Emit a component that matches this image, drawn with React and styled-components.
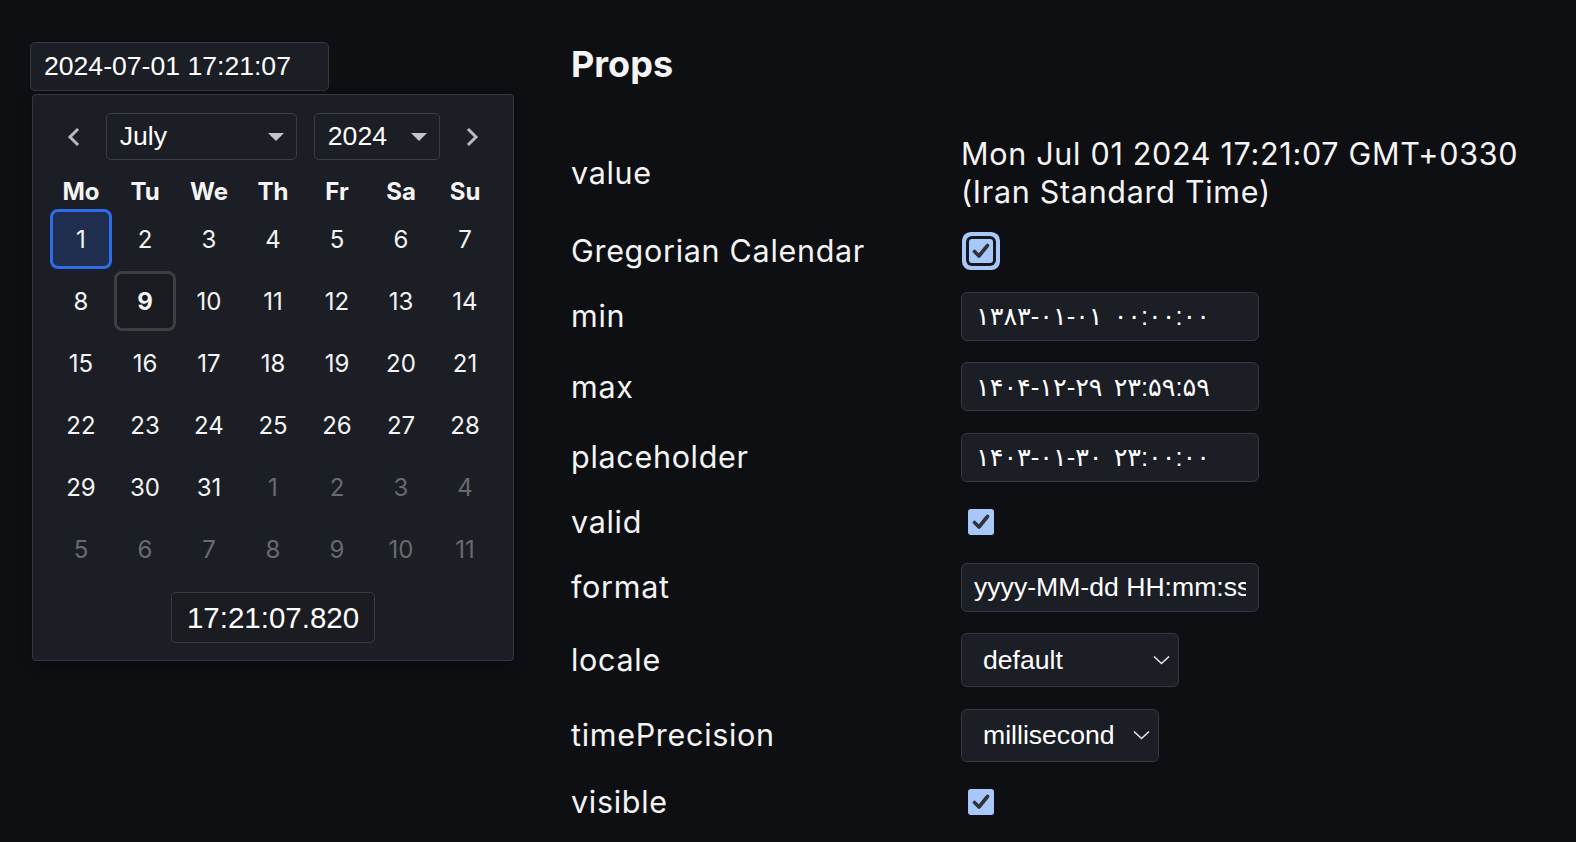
import React from "react";
import styled, { createGlobalStyle } from "styled-components";

const GlobalStyle = createGlobalStyle`
  html, body {
    margin: 0;
    background: #0e0f13;
  }
  body {
    font-family: Inter, "Noto Sans", sans-serif;
    color: #f2f2f2;
  }
`;

const weekdays = ["Mo", "Tu", "We", "Th", "Fr", "Sa", "Su"];

// July 2024 starts on a Monday, grid ends on Aug 11
const buildDays = () => {
  const days = [];
  for (let d = 1; d <= 31; d++) days.push({ n: d, outside: false });
  for (let d = 1; d <= 11; d++) days.push({ n: d, outside: true });
  return days;
};

const ChevronIcon = ({ dir }) => (
  <svg width="14" height="20" viewBox="0 0 14 20">
    <polyline
      points={dir === "left" ? "10,3 3,10 10,17" : "4,3 11,10 4,17"}
      fill="none"
      stroke="#b8b9bc"
      strokeWidth="3"
      strokeLinecap="square"
    />
  </svg>
);

const Caret = () => (
  <svg width="16" height="8" viewBox="0 0 16 8">
    <polygon points="0,0 16,0 8,8" fill="#c4c5c8" />
  </svg>
);

const SelectChevron = () => (
  <svg width="17" height="10" viewBox="0 0 17 10">
    <polyline points="1,1.5 8.5,8.5 16,1.5" fill="none" stroke="#e8e8e8" strokeWidth="1.6" />
  </svg>
);

const CheckMark = () => (
  <svg width="18" height="16" viewBox="0 0 18 16">
    <polyline
      points="2.5,8.5 7,13 15.5,2.5"
      fill="none"
      stroke="#323338"
      strokeWidth="3.6"
      strokeLinecap="round"
      strokeLinejoin="round"
    />
  </svg>
);

const App = () => {
  const days = buildDays();
  return (
    <>
      <GlobalStyle />
      <Page>
        <PickerColumn>
          <DateField>2024-07-01 17:21:07</DateField>
          <Popup>
            <CalHeader>
              <NavButton>
                <ChevronIcon dir="left" />
              </NavButton>
              <CalSelect width={192}>
                <span>July</span>
                <Caret />
              </CalSelect>
              <CalSelect width={127} $offset={9}>
                <span>2024</span>
                <Caret />
              </CalSelect>
              <NavButton>
                <ChevronIcon dir="right" />
              </NavButton>
            </CalHeader>
            <DayGrid>
              {weekdays.map((w) => (
                <Weekday key={w}>{w}</Weekday>
              ))}
              {days.map((d, i) => (
                <Day
                  key={i}
                  $outside={d.outside}
                  $selected={!d.outside && d.n === 1}
                  $today={!d.outside && d.n === 9}
                >
                  {d.n}
                </Day>
              ))}
            </DayGrid>
            <TimeRow>
              <TimeField>17:21:07.820</TimeField>
            </TimeRow>
          </Popup>
        </PickerColumn>

        <PropsColumn>
          <Heading>Props</Heading>
          <PropsGrid>
            <Label>value</Label>
            <ValueText>Mon Jul 01 2024 17:21:07 GMT+0330 (Iran Standard Time)</ValueText>

            <Label>Gregorian Calendar</Label>
            <Cell>
              <CheckBox $focused>
                <CheckMark />
              </CheckBox>
            </Cell>

            <Label>min</Label>
            <Cell>
              <TextField $persian>
                <FieldText>۱۳۸۳-۰۱-۰۱ ۰۰:۰۰:۰۰</FieldText>
              </TextField>
            </Cell>

            <Label>max</Label>
            <Cell>
              <TextField $persian>
                <FieldText>۱۴۰۴-۱۲-۲۹ ۲۳:۵۹:۵۹</FieldText>
              </TextField>
            </Cell>

            <Label>placeholder</Label>
            <Cell>
              <TextField $persian>
                <FieldText>۱۴۰۳-۰۱-۳۰ ۲۳:۰۰:۰۰</FieldText>
              </TextField>
            </Cell>

            <Label>valid</Label>
            <Cell>
              <CheckBox>
                <CheckMark />
              </CheckBox>
            </Cell>

            <Label>format</Label>
            <Cell>
              <TextField>
                <FieldText>yyyy-MM-dd HH:mm:ss</FieldText>
              </TextField>
            </Cell>

            <Label>locale</Label>
            <Cell>
              <NativeSelect width={218} height={54}>
                <span>default</span>
                <SelectChevron />
              </NativeSelect>
            </Cell>

            <Label>timePrecision</Label>
            <Cell>
              <NativeSelect width={198} height={53}>
                <span>millisecond</span>
                <SelectChevron />
              </NativeSelect>
            </Cell>

            <Label>visible</Label>
            <Cell>
              <CheckBox>
                <CheckMark />
              </CheckBox>
            </Cell>
          </PropsGrid>
        </PropsColumn>
      </Page>
    </>
  );
};

export default App;

const Page = styled.div`
  display: flex;
  align-items: flex-start;
  padding: 42px 0 0 30px;
  min-height: 842px;
  box-sizing: border-box;
`;

const PickerColumn = styled.div`
  width: 485px;
  flex-shrink: 0;
  display: flex;
  flex-direction: column;
`;

const fieldFont = `
  font-family: "Liberation Sans", Arial, "DejaVu Sans", sans-serif;
  font-size: 26.6px;
  color: #ffffff;
`;

const DateField = styled.div`
  ${fieldFont}
  width: 299px;
  height: 49px;
  box-sizing: border-box;
  display: flex;
  align-items: center;
  padding-left: 13px;
  background: #1c1e25;
  border: 1px solid #353842;
  border-radius: 5px;
`;

const Popup = styled.div`
  margin: 3px 0 0 2px;
  width: 482px;
  box-sizing: border-box;
  padding: 18px 17px 17px;
  background: #1c1e25;
  border: 1px solid #353842;
  border-radius: 4px;
  box-shadow: 0 4px 14px rgba(0, 0, 0, 0.3);
`;

const CalHeader = styled.div`
  display: flex;
  align-items: center;
  gap: 8px;
  height: 47px;
`;

const NavButton = styled.div`
  width: 48px;
  height: 47px;
  display: flex;
  align-items: center;
  justify-content: center;
`;

const CalSelect = styled.div`
  ${fieldFont}
  width: ${(p) => p.width}px;
  margin-left: ${(p) => p.$offset || 0}px;
  height: 47px;
  box-sizing: border-box;
  display: flex;
  align-items: center;
  justify-content: space-between;
  padding: 0 12px 0 13px;
  background: #1c1e25;
  border: 1px solid #3a3d47;
  border-radius: 5px;
`;

const DayGrid = styled.div`
  display: grid;
  grid-template-columns: repeat(7, 62px);
  grid-auto-rows: 60px;
  grid-template-rows: 31px;
  gap: 2px;
  margin-top: 16px;
`;

const Weekday = styled.div`
  font-family: Inter, sans-serif;
  font-weight: 700;
  font-size: 24px;
  display: flex;
  align-items: center;
  justify-content: center;
  color: #f4f4f4;
`;

const Day = styled.div`
  font-family: Inter, sans-serif;
  font-size: 24px;
  display: flex;
  align-items: center;
  justify-content: center;
  box-sizing: border-box;
  border-radius: 8px;
  color: ${(p) => (p.$outside ? "#686a70" : "#f4f4f4")};
  font-weight: ${(p) => (p.$today ? 700 : 400)};
  border: 3px solid
    ${(p) => (p.$selected ? "#2f6de8" : p.$today ? "#3c3e44" : "transparent")};
  background: ${(p) => (p.$selected ? "#1f2d4e" : p.$today ? "#1a1b20" : "transparent")};
`;

const TimeRow = styled.div`
  display: flex;
  justify-content: center;
  margin-top: 13px;
`;

const TimeField = styled.div`
  ${fieldFont}
  font-size: 29.5px;
  width: 204px;
  height: 51px;
  box-sizing: border-box;
  display: flex;
  align-items: center;
  justify-content: center;
  background: #1a1c22;
  border: 1px solid #383b44;
  border-radius: 5px;
`;

const PropsColumn = styled.div`
  margin-left: 56px;
  flex: 1;
  padding-right: 30px;
`;

const Heading = styled.h2`
  margin: 0;
  font-family: Inter, sans-serif;
  font-size: 36px;
  line-height: 44px;
  font-weight: 700;
  color: #f4f4f4;
`;

const PropsGrid = styled.div`
  display: grid;
  grid-template-columns: 390px 1fr;
  row-gap: 21.5px;
  align-items: center;
  margin-top: 48.5px;
`;

const Label = styled.div`
  font-family: Inter, sans-serif;
  font-size: 30.5px;
  letter-spacing: 0.7px;
  line-height: 38px;
  color: #f4f4f4;
  white-space: nowrap;
`;

const ValueText = styled.div`
  font-family: Inter, sans-serif;
  font-size: 30.5px;
  letter-spacing: 0.7px;
  line-height: 38px;
  color: #f4f4f4;
`;

const Cell = styled.div`
  display: flex;
  align-items: center;
  min-height: 38px;
`;

const CheckBox = styled.div`
  width: ${(p) => (p.$focused ? 24 : 26)}px;
  height: ${(p) => (p.$focused ? 24 : 26)}px;
  margin-left: ${(p) => (p.$focused ? 8 : 7)}px;
  box-sizing: border-box;
  display: flex;
  align-items: center;
  justify-content: center;
  background: #a8c8fa;
  border-radius: 3px;
  box-shadow: ${(p) => (p.$focused ? "0 0 0 3px #17181d, 0 0 0 7px #a8c8fa" : "none")};
`;

const TextField = styled.div`
  ${fieldFont}
  font-size: ${(p) => (p.$persian ? "25.5px" : "26.6px")};
  letter-spacing: ${(p) => (p.$persian ? "3.8px" : "0")};
  word-spacing: ${(p) => (p.$persian ? "4px" : "0")};
  width: 298px;
  height: 49px;
  box-sizing: border-box;
  display: flex;
  align-items: center;
  padding: 0 12px 0 ${(p) => (p.$persian ? 14 : 12)}px;
  background: #1c1e25;
  border: 1px solid #353842;
  border-radius: 6px;
`;

const FieldText = styled.span`
  display: block;
  overflow: hidden;
  white-space: nowrap;
  width: 100%;
`;

const NativeSelect = styled.div`
  ${fieldFont}
  width: ${(p) => p.width}px;
  height: ${(p) => p.height}px;
  box-sizing: border-box;
  display: flex;
  align-items: center;
  justify-content: space-between;
  padding: 0 8px 0 21px;
  background: #1c1e25;
  border: 1px solid #353842;
  border-radius: 6px;
`;
